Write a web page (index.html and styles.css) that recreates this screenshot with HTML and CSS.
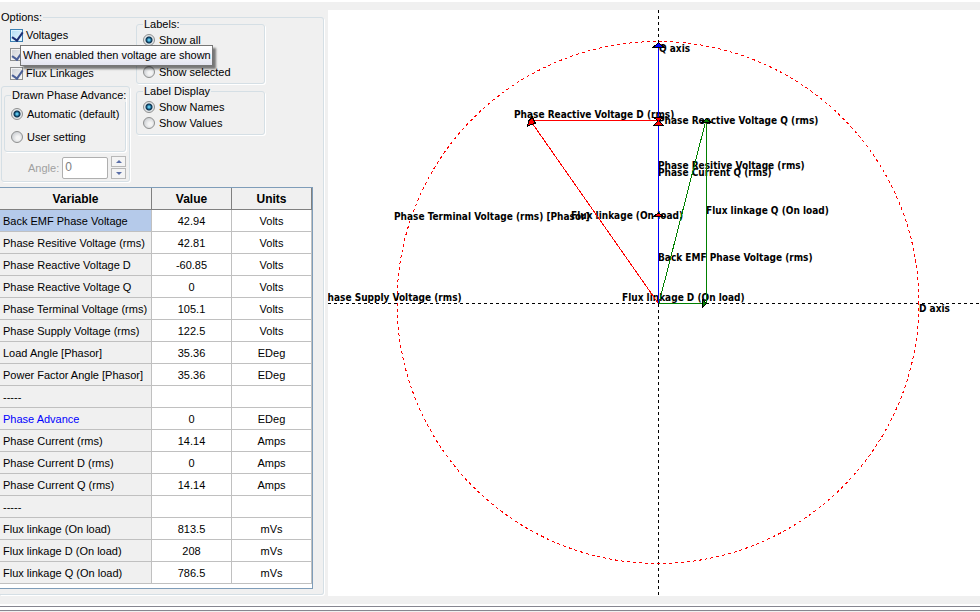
FILE: index.html
```html
<!DOCTYPE html>
<html lang="en">
<head>
<meta charset="utf-8">
<title>Phasor diagram</title>
<link rel="stylesheet" href="styles.css">
</head>
<body>
<div class="app">
  <main class="workspace">
    <fieldset class="group panel">
      <legend>Options:</legend>
      <div class="options">
        <div class="column">
          <div class="checks">
            <label class="choice"><input type="checkbox" class="check hot" checked>Voltages</label>
            <label class="choice"><input type="checkbox" class="check" checked aria-label="Currents"></label>
            <label class="choice"><input type="checkbox" class="check" checked>Flux Linkages</label>
            <div class="tooltip" role="tooltip">When enabled then voltage are shown</div>
          </div>
          <div class="advance">
            <fieldset class="group advance-group">
              <legend>Drawn Phase Advance:</legend>
              <label class="choice"><input type="radio" class="radio" name="advance" checked>Automatic (default)</label>
              <label class="choice"><input type="radio" class="radio" name="advance">User setting</label>
            </fieldset>
            <div class="angle">
              <label for="angle">Angle:</label>
              <input id="angle" class="angle-box" type="text" value="0" disabled>
              <div class="spinner">
                <button type="button" aria-label="Increase"><svg viewBox="0 0 6 3" width="6" height="3"><path d="M0 3L3 0L6 3z"/></svg></button>
                <button type="button" aria-label="Decrease"><svg viewBox="0 0 6 3" width="6" height="3"><path d="M0 0H6L3 3z"/></svg></button>
              </div>
            </div>
          </div>
        </div>
        <div class="column labels-column">
          <fieldset class="group labels-group">
            <legend>Labels:</legend>
            <label class="choice"><input type="radio" class="radio" name="labels" checked>Show all</label>
            <label class="choice"><input type="radio" class="radio" name="labels" aria-label="Show none"></label>
            <label class="choice"><input type="radio" class="radio" name="labels">Show selected</label>
          </fieldset>
          <fieldset class="group labels-group">
            <legend>Label Display</legend>
            <label class="choice"><input type="radio" class="radio" name="display" checked>Show Names</label>
            <label class="choice"><input type="radio" class="radio" name="display">Show Values</label>
          </fieldset>
        </div>
      </div>
      <div class="grid">
        <table>
          <thead><tr><th class="variable">Variable</th><th>Value</th><th>Units</th></tr></thead>
          <tbody>
            <tr><td class="selected">Back EMF Phase Voltage</td><td>42.94</td><td>Volts</td></tr>
            <tr><td>Phase Resitive Voltage (rms)</td><td>42.81</td><td>Volts</td></tr>
            <tr><td>Phase Reactive Voltage D</td><td>-60.85</td><td>Volts</td></tr>
            <tr><td>Phase Reactive Voltage Q</td><td>0</td><td>Volts</td></tr>
            <tr><td>Phase Terminal Voltage (rms)</td><td>105.1</td><td>Volts</td></tr>
            <tr><td>Phase Supply Voltage (rms)</td><td>122.5</td><td>Volts</td></tr>
            <tr><td>Load Angle [Phasor]</td><td>35.36</td><td>EDeg</td></tr>
            <tr><td>Power Factor Angle [Phasor]</td><td>35.36</td><td>EDeg</td></tr>
            <tr><td>-----</td><td></td><td></td></tr>
            <tr><td class="editable">Phase Advance</td><td>0</td><td>EDeg</td></tr>
            <tr><td>Phase Current (rms)</td><td>14.14</td><td>Amps</td></tr>
            <tr><td>Phase Current D (rms)</td><td>0</td><td>Amps</td></tr>
            <tr><td>Phase Current Q (rms)</td><td>14.14</td><td>Amps</td></tr>
            <tr><td>-----</td><td></td><td></td></tr>
            <tr><td>Flux linkage (On load)</td><td>813.5</td><td>mVs</td></tr>
            <tr><td>Flux linkage D (On load)</td><td>208</td><td>mVs</td></tr>
            <tr><td>Flux linkage Q (On load)</td><td>786.5</td><td>mVs</td></tr>
          </tbody>
        </table>
      </div>
    </fieldset>
    <section class="plot">
      <svg class="phasor" viewBox="328 10 652 586" preserveAspectRatio="xMinYMin meet" role="img" aria-label="Phasor diagram">
        <g class="axes">
          <path d="M658.500 10V596"/>
          <path d="M328 303.500H980"/>
        </g>
        <circle class="limit" cx="658" cy="302.500" r="261"/>
        <g class="names">
          <text x="659" y="52">Q axis</text>
          <text x="919" y="312">D axis</text>
          <text x="514" y="118">Phase Reactive Voltage D (rms)</text>
          <text x="658" y="124">Phase Reactive Voltage Q (rms)</text>
          <text x="658" y="169">Phase Resitive Voltage (rms)</text>
          <text x="658" y="176">Phase Current Q (rms)</text>
          <text x="394" y="220">Phase Terminal Voltage (rms) [Phasor]</text>
          <text x="571" y="219">Flux linkage (On load)</text>
          <text x="706" y="214">Flux linkage Q (On load)</text>
          <text x="658" y="261">Back EMF Phase Voltage (rms)</text>
          <text x="622" y="301">Flux linkage D (On load)</text>
          <text x="321" y="301">Phase Supply Voltage (rms)</text>
        </g>
        <path class="red" d="M658 303L531 121.500"/>
        <path class="red" d="M531 120.500H658"/>
        <path class="green" d="M658.500 303.500H706.500V121M659 303L705 124"/>
        <path class="blue" d="M658.500 303V44"/>
        <g class="heads">
          <path class="fill-blue" d="M658.500 42.500L663.500 47H653.500z"/>
          <path class="fill-red" d="M653.500 117H663.500L659 121L663.500 125.500H653.500L658 121z"/>
          <path class="fill-red" d="M532 116.500L531.500 118L528.500 121L527.500 126.500L530.500 124.500L535.500 123.500z"/>
          <path class="fill-green" d="M706.500 118.500L711 122.500H702z"/>
          <path class="fill-green" d="M702.500 299.500L706.500 303.500L702.500 307.500z"/>
          <path class="fill-red" d="M658.500 213L663 216H654z"/>
        </g>
      </svg>
    </section>
  </main>
  <footer class="splitter"></footer>
</div>
</body>
</html>
```

FILE: styles.css
```css
* { box-sizing: border-box; }

body {
  margin: 0;
  background: #f0f0f0;
  color: #000;
  font: 11px/14px "Liberation Sans", Arial, sans-serif;
}

.app {
  display: flex;
  flex-direction: column;
  min-height: 100vh;
  border-top: 2px solid #fff;
}

.workspace {
  display: flex;
  align-items: flex-start;
  flex: 1;
  padding: 8px 0;
}

.group {
  min-width: 0;
  margin: 0;
  padding: 0;
  border: 1px solid #d5dfe5;
  border-radius: 3px;
  box-shadow: 1px 1px 0 #fff;
}

.group legend {
  padding: 0 1px;
  white-space: nowrap;
}

.panel {
  flex: 0 0 324px;
  margin-right: 4px;
  padding-bottom: 5px;
  border-left: 0;
  border-radius: 0 3px 3px 0;
}

.options { display: flex; }

.column { flex: 0 0 136px; }

.checks {
  position: relative;
  display: flex;
  flex-direction: column;
  gap: 5px;
  padding: 4px 0 0 10px;
}

.choice {
  display: flex;
  align-items: center;
  gap: 4px;
  height: 14px;
  white-space: nowrap;
}

.checks .choice { gap: 3px; }

.check {
  appearance: none;
  position: relative;
  width: 13px;
  height: 13px;
  margin: 0;
  border: 1px solid #8e8f8f;
  background: linear-gradient(135deg, #cbcfd5, #f6f6f6);
  box-shadow: inset 0 0 0 1px #f4f4f4;
}

.check.hot {
  border-color: #3c7fb1;
  background: linear-gradient(135deg, #b0dcf6, #eef9ff);
  box-shadow: inset 0 0 0 1px #def4ff;
}

.check:checked::after {
  content: "";
  position: absolute;
  left: 3px;
  top: 0;
  width: 5px;
  height: 9px;
  border: solid #4a5f97;
  border-width: 0 2px 2px 0;
  transform: rotate(35deg);
}

.check.hot:checked::after { border-color: #1c2f75; }

.radio {
  appearance: none;
  width: 12px;
  height: 12px;
  margin: 0;
  border: 1px solid #8e8f8f;
  border-radius: 50%;
  background: radial-gradient(circle at 60% 60%, #f4f4f4 20%, #cdd0d4 75%);
}

.radio:checked {
  background: radial-gradient(circle, #5fc4e8 0 1px, #1a6189 2px, #0b2f4b 3px, #e2e6e9 4px);
}

.tooltip {
  position: absolute;
  z-index: 1;
  left: 20px;
  top: 21px;
  padding: 2px 1px 2px 2px;
  border: 1px solid #767676;
  background: linear-gradient(#fff, #e4e5f0);
  box-shadow: 3px 3px 2px rgba(0, 0, 0, 0.5);
  line-height: 15px;
  white-space: nowrap;
}

.advance {
  width: 129px;
  margin: 6px 0 5px 1px;
  padding: 1px 3px 2px 2px;
  border: 1px solid #d5dfe5;
  border-radius: 3px;
  box-shadow: 1px 1px 0 #fff;
}

.advance-group {
  display: flex;
  flex-direction: column;
  gap: 9px;
  padding: 5px 0 7px 6px;
}

.angle {
  display: flex;
  align-items: center;
  gap: 3px;
  margin-top: 4px;
  padding-left: 24px;
  color: #a0a0a0;
}

.angle-box {
  flex: 1;
  min-width: 0;
  height: 22px;
  padding: 0 2px 2px;
  border: 1px solid #afafaf;
  border-radius: 2px;
  background: #fff;
  color: #808080;
  font: 12px "Liberation Sans", Arial, sans-serif;
}

.spinner {
  display: flex;
  flex-direction: column;
  gap: 1px;
}

.spinner button {
  display: flex;
  align-items: center;
  justify-content: center;
  width: 15px;
  height: 11px;
  padding: 0;
  border: 1px solid #b8b8b8;
  background: #f4f4f4;
  fill: #5a6fa8;
}

.labels-column {
  display: flex;
  flex-direction: column;
  flex-basis: 129px;
  margin-top: -7px;
}

.labels-group {
  display: flex;
  flex-direction: column;
  gap: 2px;
  padding: 2px 0 4px 6px;
}

.grid {
  width: 313px;
  padding-bottom: 4px;
  border: 1px solid #7f9db9;
  border-left: 0;
  background: #fff;
}

table {
  width: 100%;
  border-spacing: 0;
  table-layout: fixed;
}

th, td {
  height: 22px;
  padding: 0;
  border: solid #c0c0c0;
  border-width: 0 1px 1px 0;
  text-align: center;
}

th {
  width: 80px;
  border-color: #808080;
  background: #f0f0f0;
  font-size: 12px;
}

th.variable { width: 152px; }

td:first-child {
  padding-left: 3px;
  background: #f0f0f0;
  text-align: left;
  white-space: nowrap;
}

td.selected:first-child { background: #b5caea; }

.editable { color: #00f; }

.plot {
  flex: 1;
  min-width: 0;
  background: #fff;
}

.phasor {
  display: block;
  width: 100%;
  overflow: hidden;
  fill: none;
  shape-rendering: crispEdges;
}

.axes {
  stroke: #000;
  stroke-dasharray: 3 3;
}

.limit {
  stroke: #f00;
  stroke-dasharray: 3 3;
}

.red { stroke: #f00; }
.green { stroke: #008000; }
.blue { stroke: #00f; }

.heads { stroke: #000; }
.fill-blue { fill: #00f; }
.fill-red { fill: #f00; }
.fill-green { fill: #008000; }

.names {
  fill: #000;
  font: bold 10px "DejaVu Sans Condensed", "Noto Sans", sans-serif;
}

.splitter {
  height: 8px;
  background: linear-gradient(#fff 2px, #868690 2px 3px, #fff 3px 6px, #868690 6px 7px, #f0f0f0 7px);
}
```
